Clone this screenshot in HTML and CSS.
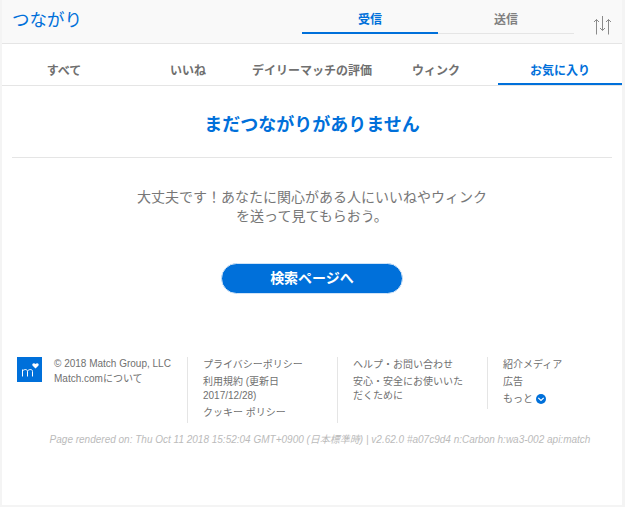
FILE: index.html
```html
<!DOCTYPE html>
<html lang="ja">
<head>
<meta charset="utf-8">
<title>つながり</title>
<link rel="stylesheet" href="styles.css">
</head>
<body>
<div class="page">
  <header class="top">
    <h1 class="brand">つながり</h1>
    <nav class="seg">
      <a class="seg-item seg-on">受信</a>
      <a class="seg-item">送信</a>
    </nav>
    <svg class="sort" width="18" height="19" viewBox="0 0 18 19" fill="none" stroke="#8a8a8a" stroke-width="1">
      <path d="M3.5 18.5V3.5M1 6L3.5 3.5L6 6"/>
      <path d="M9.5 0V14.5M7 12L9.5 14.5L12 12"/>
      <path d="M15.5 18.5V3.5M13 6L15.5 3.5L18 6"/>
    </svg>
  </header>
  <nav class="tabs">
    <a class="tab">すべて</a>
    <a class="tab">いいね</a>
    <a class="tab">デイリーマッチの評価</a>
    <a class="tab">ウィンク</a>
    <a class="tab tab-on">お気に入り</a>
  </nav>
  <main class="empty">
    <h2 class="empty-title">まだつながりがありません</h2>
    <p class="empty-text">大丈夫です！あなたに関心がある人にいいねやウィンクを送って見てもらおう。</p>
    <a class="btn">検索ページへ</a>
  </main>
  <footer class="foot">
    <div class="foot-brand">
      <svg class="logo" width="25" height="25" viewBox="0 0 25 25">
        <rect width="25" height="25" fill="#0070da"/>
        <path d="M5.5 19.5V12.5M5.5 14.5C6 12.3 10.5 11.5 10.5 14.5V19.5M10.5 14.5C11 12.3 15.5 11.5 15.5 14.5V19.5" fill="none" stroke="#fff" stroke-width="1"/>
        <path d="M18.5 11.5L15.7 8.7C14.3 7 16.8 5 18.5 7C20.2 5 22.7 7 21.3 8.7Z" fill="#fff"/>
      </svg>
      <div class="foot-lines">
        <span>© 2018 Match Group, LLC</span>
        <span>Match.comについて</span>
      </div>
    </div>
    <ul class="foot-col">
      <li>プライバシーポリシー</li>
      <li>利用規約 (更新日 2017/12/28)</li>
      <li>クッキー ポリシー</li>
    </ul>
    <ul class="foot-col">
      <li>ヘルプ・お問い合わせ</li>
      <li>安心・安全にお使いいただくために</li>
    </ul>
    <ul class="foot-col">
      <li>紹介メディア</li>
      <li>広告</li>
      <li class="more">もっと
        <svg width="10" height="10" viewBox="0 0 10 10"><circle cx="5" cy="5" r="5" fill="#0070da"/><path d="M2.3 3.8L5 6.5L7.7 3.8" fill="none" stroke="#fff" stroke-width="1.2"/></svg>
      </li>
    </ul>
  </footer>
  <p class="render">Page rendered on: Thu Oct 11 2018 15:52:04 GMT+0900 (日本標準時) | v2.62.0 #a07c9d4 n:Carbon h:wa3-002 api:match</p>
</div>
</body>
</html>
```
FILE: styles.css
```css
* { box-sizing: border-box; }
html, body { margin: 0; height: 100%; }
body {
  background: #f4f4f4;
  font-family: "Liberation Sans", "Noto Sans CJK JP", sans-serif;
  color: #666;
  overflow: hidden;
}
.page {
  width: 620px;
  height: 505px;
  margin-left: 2px;
  background: #fff;
}
.top {
  height: 44px;
  background: #f9f9f9;
  border-bottom: 1px solid #e5e5e5;
  display: flex;
  align-items: flex-start;
}
.brand {
  margin: 0;
  width: 300px;
  padding: 7px 0 0 10px;
  font-size: 17.5px;
  line-height: 26px;
  font-weight: 400;
  color: #0070da;
}
.seg { display: flex; width: 272px; }
.seg-item {
  width: 136px;
  height: 34px;
  padding-top: 12px;
  text-align: center;
  font-size: 12px;
  line-height: 16px;
  font-weight: 700;
  color: #808080;
  border-bottom: 1px solid #e5e5e5;
}
.seg-on { color: #0070da; border-bottom: 2px solid #0070da; }
.sort { margin: 16px 0 0 19px; overflow: visible; }
.tabs { display: flex; height: 42px; border-bottom: 1px solid #e5e5e5; }
.tab {
  width: 124px;
  padding-top: 19px;
  text-align: center;
  font-size: 12px;
  line-height: 16px;
  font-weight: 700;
  color: #707070;
  white-space: nowrap;
}
.tab-on { color: #0070da; border-bottom: 2px solid #0070da; }
.empty { display: flex; flex-direction: column; align-items: center; padding: 0 10px; }
.empty-title {
  width: 100%;
  margin: 0;
  height: 72px;
  padding-top: 27px;
  text-align: center;
  font-size: 18px;
  line-height: 24px;
  font-weight: 700;
  color: #0070da;
  border-bottom: 1px solid #e5e5e5;
}
.empty-text {
  width: 358px;
  margin: 30px 0 0;
  text-align: center;
  font-size: 14px;
  line-height: 19px;
  color: #777;
}
.btn {
  width: 182px;
  height: 31px;
  margin-top: 37px;
  border-radius: 16px;
  background: #0070da;
  border: 1px solid #cfe3f7;
  color: #fff;
  text-align: center;
  font-size: 14px;
  line-height: 28px;
  font-weight: 700;
}
.foot {
  display: flex;
  align-items: flex-start;
  margin-top: 63px;
  padding-left: 15px;
  font-size: 10px;
  line-height: 14px;
  color: #707070;
}
.foot-brand { display: flex; width: 170px; gap: 12px; }
.logo { flex: none; }
.foot-lines { display: flex; flex-direction: column; gap: 1px; white-space: nowrap; }
.foot-col {
  width: 150px;
  min-height: 66px;
  margin: 0;
  padding: 1px 16px 0 15px;
  list-style: none;
  border-left: 1px solid #e5e5e5;
}
.foot-col li { margin-bottom: 3px; }
.foot-col:last-child { width: 100px; min-height: 50px; }
.more svg { vertical-align: -2px; }
.render {
  margin: 10px 0 0;
  padding-left: 16px;
  text-align: center;
  font-size: 10px;
  line-height: 14px;
  font-style: italic;
  color: #bbb;
  white-space: nowrap;
}
```
